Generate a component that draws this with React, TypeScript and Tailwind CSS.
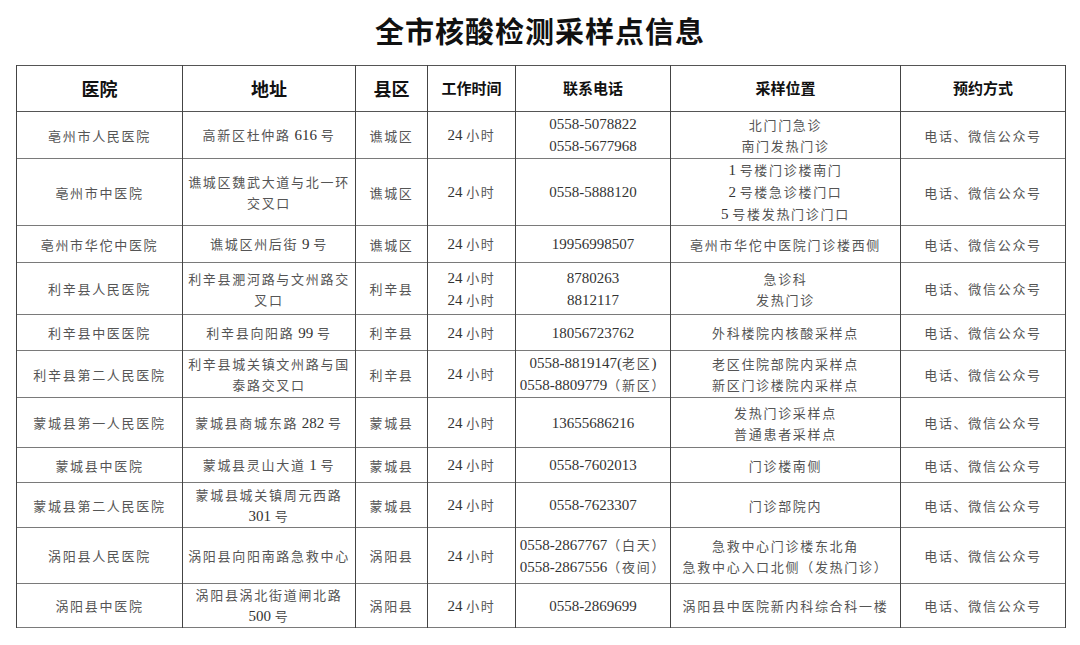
import React from "react";

const CJK = /([\u3000-\u303f\u3400-\u9fff\uff00-\uffef]+)/;

function Txt({ s }: { s: string }) {
  const parts = s.split(CJK);
  return (
    <>
      {parts.map((p, i) =>
        p === "" ? null : CJK.test(p) ? (
          <span key={i} className="font-['Noto_Sans_CJK_SC',sans-serif] text-[13px] tracking-[1.7px] text-[#555]">
            {p}
          </span>
        ) : (
          <span key={i} className="font-['Liberation_Serif','Noto_Sans_CJK_SC',serif] text-[15px] text-[#333]">
            {p}
          </span>
        )
      )}
    </>
  );
}

type Row = { h: string; cells: string[][] };

const rows: Row[] = [
  { h: "h-[47px]", cells: [["亳州市人民医院"], ["高新区杜仲路 616 号"], ["谯城区"], ["24 小时"], ["0558-5078822", "0558-5677968"], ["北门门急诊", "南门发热门诊"], ["电话、微信公众号"]] },
  { h: "h-[67px]", cells: [["亳州市中医院"], ["谯城区魏武大道与北一环", "交叉口"], ["谯城区"], ["24 小时"], ["0558-5888120"], ["1 号楼门诊楼南门", "2 号楼急诊楼门口", "5 号楼发热门诊门口"], ["电话、微信公众号"]] },
  { h: "h-[37px]", cells: [["亳州市华佗中医院"], ["谯城区州后街 9 号"], ["谯城区"], ["24 小时"], ["19956998507"], ["亳州市华佗中医院门诊楼西侧"], ["电话、微信公众号"]] },
  { h: "h-[52px]", cells: [["利辛县人民医院"], ["利辛县淝河路与文州路交", "叉口"], ["利辛县"], ["24 小时", "24 小时"], ["8780263", "8812117"], ["急诊科", "发热门诊"], ["电话、微信公众号"]] },
  { h: "h-[36px]", cells: [["利辛县中医医院"], ["利辛县向阳路 99 号"], ["利辛县"], ["24 小时"], ["18056723762"], ["外科楼院内核酸采样点"], ["电话、微信公众号"]] },
  { h: "h-[47px]", cells: [["利辛县第二人民医院"], ["利辛县城关镇文州路与国", "泰路交叉口"], ["利辛县"], ["24 小时"], ["0558-8819147(老区)", "0558-8809779（新区）"], ["老区住院部院内采样点", "新区门诊楼院内采样点"], ["电话、微信公众号"]] },
  { h: "h-[50px]", cells: [["蒙城县第一人民医院"], ["蒙城县商城东路 282 号"], ["蒙城县"], ["24 小时"], ["13655686216"], ["发热门诊采样点", "普通患者采样点"], ["电话、微信公众号"]] },
  { h: "h-[35px]", cells: [["蒙城县中医院"], ["蒙城县灵山大道 1 号"], ["蒙城县"], ["24 小时"], ["0558-7602013"], ["门诊楼南侧"], ["电话、微信公众号"]] },
  { h: "h-[45px]", cells: [["蒙城县第二人民医院"], ["蒙城县城关镇周元西路", "301 号"], ["蒙城县"], ["24 小时"], ["0558-7623307"], ["门诊部院内"], ["电话、微信公众号"]] },
  { h: "h-[56px]", cells: [["涡阳县人民医院"], ["涡阳县向阳南路急救中心"], ["涡阳县"], ["24 小时"], ["0558-2867767（白天）", "0558-2867556（夜间）"], ["急救中心门诊楼东北角", "急救中心入口北侧（发热门诊）"], ["电话、微信公众号"]] },
  { h: "h-[43px]", cells: [["涡阳县中医院"], ["涡阳县涡北街道闸北路", "500 号"], ["涡阳县"], ["24 小时"], ["0558-2869699"], ["涡阳县中医院新内科综合科一楼"], ["电话、微信公众号"]] },
];

const headers: { t: string; big: boolean }[] = [
  { t: "医院", big: true },
  { t: "地址", big: true },
  { t: "县区", big: true },
  { t: "工作时间", big: false },
  { t: "联系电话", big: false },
  { t: "采样位置", big: false },
  { t: "预约方式", big: false },
];

export default function App() {
  return (
    <div className="w-[1080px] h-[645px] bg-white overflow-hidden">
      <div className="h-[65px] pt-[10px] text-center leading-[40px] font-['Noto_Sans_CJK_SC',sans-serif] font-bold text-[29px] tracking-[1px] text-[#111]">
        全市核酸检测采样点信息
      </div>
      <div className="pl-[16px]">
        <table className="table-fixed border-collapse w-[1049px]">
          <colgroup>
            <col className="w-[166px]" />
            <col className="w-[173px]" />
            <col className="w-[72px]" />
            <col className="w-[88px]" />
            <col className="w-[155px]" />
            <col className="w-[230px]" />
            <col className="w-[165px]" />
          </colgroup>
          <thead>
            <tr className="h-[46px] border-t border-b border-[#555]">
              {headers.map((h, i) => (
                <th
                  key={i}
                  className={
                    h.big
                      ? "border-x border-[#444] p-0 text-center align-middle font-['Noto_Sans_CJK_SC',sans-serif] font-bold text-[18px] text-[#111]"
                      : "border-x border-[#444] p-0 text-center align-middle font-['Noto_Sans_CJK_SC',sans-serif] font-bold text-[15px] text-[#111]"
                  }
                >
                  {h.t}
                </th>
              ))}
            </tr>
          </thead>
          <tbody>
            {rows.map((r, ri) => (
              <tr key={ri} className={`${r.h} border-b border-[#7a7a7a]`}>
                {r.cells.map((c, ci) => (
                  <td key={ci} className="border-x border-[#444] p-0 text-center align-middle leading-[21px]">
                    {c.map((line, li) => (
                      <div key={li} className="whitespace-nowrap">
                        <Txt s={line} />
                      </div>
                    ))}
                  </td>
                ))}
              </tr>
            ))}
          </tbody>
        </table>
      </div>
    </div>
  );
}
